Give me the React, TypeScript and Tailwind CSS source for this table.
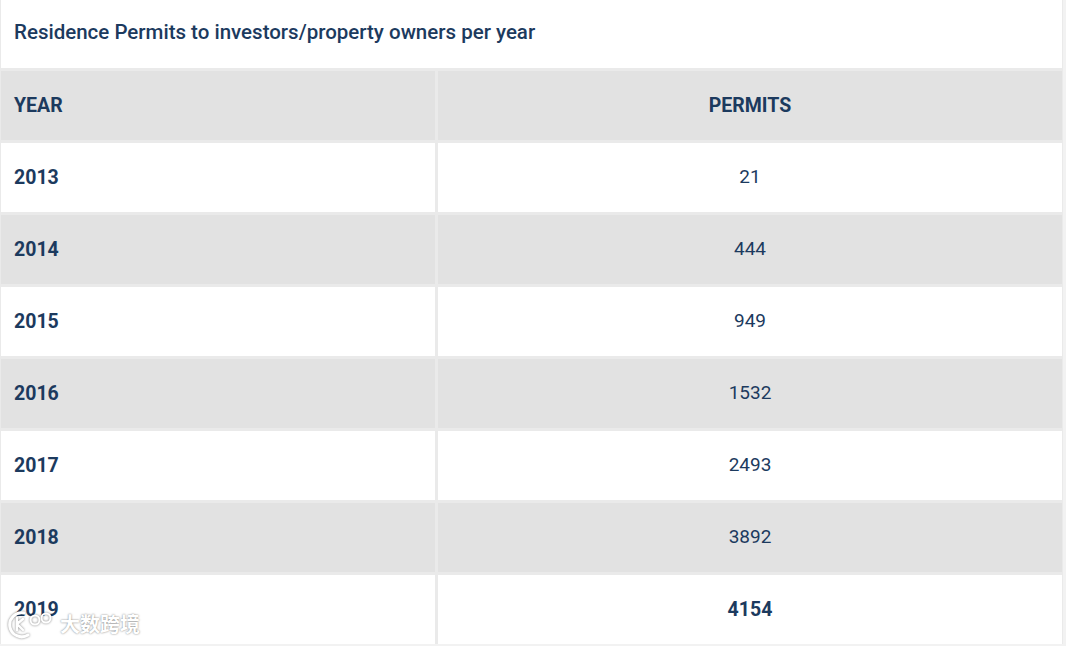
const rows = [
  { year: '2013', permits: '21' },
  { year: '2014', permits: '444' },
  { year: '2015', permits: '949' },
  { year: '2016', permits: '1532' },
  { year: '2017', permits: '2493' },
  { year: '2018', permits: '3892' },
  { year: '2019', permits: '4154', strong: true },
];

function Watermark() {
  return (
    <div className="absolute left-[7px] top-[609px] flex items-center gap-[3px] pointer-events-none">
      <svg width="50" height="30" viewBox="0 0 50 30" fill="none" className="drop-shadow-[0_0_1px_rgba(0,0,0,0.5)]">
        <path d="M17 4 A12 12 0 1 0 21 26" stroke="white" strokeWidth="3" strokeLinecap="round" />
        <path d="M10 9 L10 21 M10 15 L16 10 M10 15 L16 21" stroke="white" strokeWidth="2.4" strokeLinecap="round" />
        <circle cx="28" cy="11" r="4.5" stroke="white" strokeWidth="2" />
        <circle cx="39" cy="9" r="4.5" stroke="white" strokeWidth="2" />
      </svg>
      <span className="text-[20px] font-bold text-white [font-family:'Noto_Sans_CJK_SC',sans-serif] [text-shadow:0_0_2px_rgba(0,0,0,0.55)]">
        大数跨境
      </span>
    </div>
  );
}

export default function App() {
  return (
    <div className="relative w-[1066px] h-[646px] overflow-hidden bg-[#f2f2f2] text-[#1c3a5e] [font-family:Roboto,'Liberation_Sans',sans-serif]">
      <div className="w-[1063px] bg-[#eaeaea] pl-px pr-px">
        <div className="h-[68px] bg-white flex items-center pl-[13px] pb-[4px]">
          <h2 className="text-[20.5px] font-medium">
            Residence Permits to investors/property owners per year
          </h2>
        </div>
        <div className="grid grid-cols-[434px_1fr] gap-[3px] pt-[3px]">
          <div className="h-[69px] bg-[#e2e2e2] flex items-center pl-[13px] text-[19.5px] font-bold">YEAR</div>
          <div className="h-[69px] bg-[#e2e2e2] flex items-center justify-center text-[19.5px] font-bold">PERMITS</div>
          {rows.map((r, i) => {
            const bg = i % 2 === 0 ? 'bg-white' : 'bg-[#e2e2e2]';
            return [
              <div key={r.year + 'y'} className={`h-[69px] ${bg} flex items-center pl-[13px] text-[19.5px] font-bold`}>
                {r.year}
              </div>,
              <div
                key={r.year + 'p'}
                className={`h-[69px] ${bg} flex items-center justify-center ${r.strong ? 'text-[19.5px] font-bold' : 'text-[19px] font-normal'}`}
              >
                {r.permits}
              </div>,
            ];
          })}
        </div>
      </div>
      <Watermark />
    </div>
  );
}
